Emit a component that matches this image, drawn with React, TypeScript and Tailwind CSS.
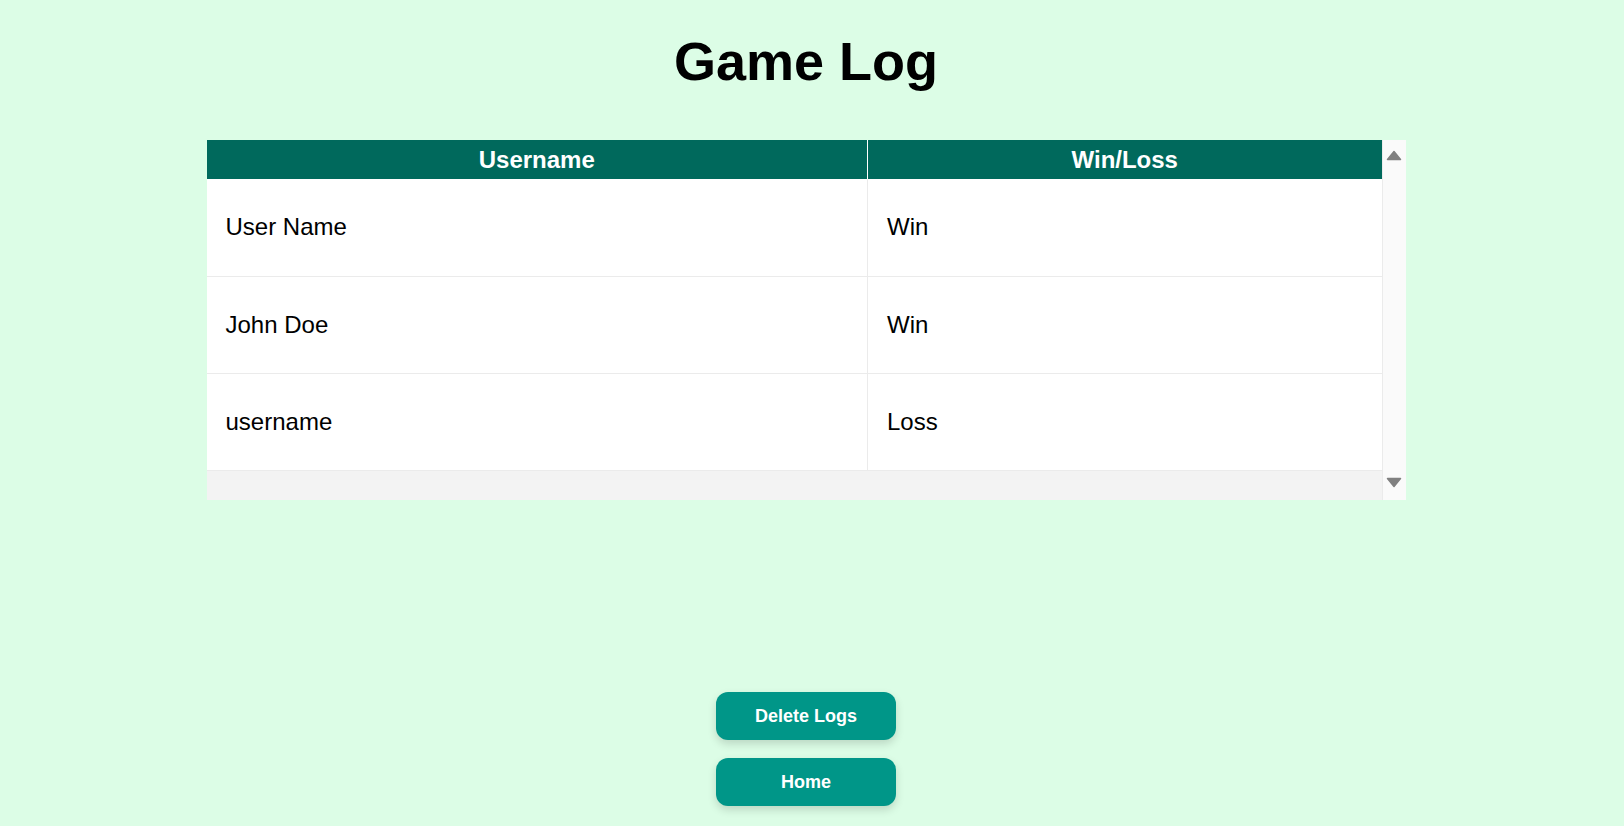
import React from 'react';

type LogEntry = { id: number; username: string; result: 'Win' | 'Loss' };

const logs: LogEntry[] = [
  { id: 1, username: 'User Name', result: 'Win' },
  { id: 2, username: 'John Doe', result: 'Win' },
  { id: 3, username: 'username', result: 'Loss' },
];

function ScrollArrow({ dir }: { dir: 'up' | 'down' }) {
  return (
    <svg width="16" height="11" viewBox="0 0 16 11" aria-hidden="true">
      <path
        d={dir === 'up' ? 'M8 1.5 L14.5 9.5 L1.5 9.5 Z' : 'M1.5 1.5 L14.5 1.5 L8 9.5 Z'}
        fill="#808080"
        stroke="#808080"
        strokeWidth="1.5"
        strokeLinejoin="round"
      />
    </svg>
  );
}

export default function App() {
  return (
    <main className="min-h-screen bg-[#dcfde6] pr-3 flex flex-col items-center font-['Liberation_Sans',Arial,sans-serif] text-black">
      <h1 className="mt-[30px] text-[54px] leading-[62px] font-bold">Game Log</h1>

      <div className="mt-[48px] w-[1199px] h-[360px] flex bg-[#f3f3f3]">
        <div className="flex-1">
          <table className="w-full table-fixed border-collapse">
            <colgroup>
              <col className="w-[661px]" />
              <col />
            </colgroup>
            <thead>
              <tr className="bg-[#00695c] text-white h-[39px]">
                <th className="text-[24px] font-bold border-r border-white p-0">Username</th>
                <th className="text-[24px] font-bold p-0">Win/Loss</th>
              </tr>
            </thead>
            <tbody>
              {logs.map((log) => (
                <tr key={log.id} className="bg-white h-[97px] border-b border-[#ebebeb]">
                  <td className="px-[19px] text-[24px] border-r border-[#ebebeb]">{log.username}</td>
                  <td className="px-[19px] text-[24px]">{log.result}</td>
                </tr>
              ))}
            </tbody>
          </table>
        </div>
        <div className="w-[24px] bg-[#fafafa] border-l border-[#ebebeb] flex flex-col items-center justify-between pt-[10px] pb-[12px]">
          <ScrollArrow dir="up" />
          <ScrollArrow dir="down" />
        </div>
      </div>

      <div className="mt-[192px] flex flex-col gap-[18px]">
        <button className="w-[180px] h-[48px] rounded-xl bg-[#009688] text-white text-[18px] font-bold shadow-[0_4px_8px_rgba(0,0,0,0.15)]">
          Delete Logs
        </button>
        <button className="w-[180px] h-[48px] rounded-xl bg-[#009688] text-white text-[18px] font-bold shadow-[0_4px_8px_rgba(0,0,0,0.15)]">
          Home
        </button>
      </div>
    </main>
  );
}
